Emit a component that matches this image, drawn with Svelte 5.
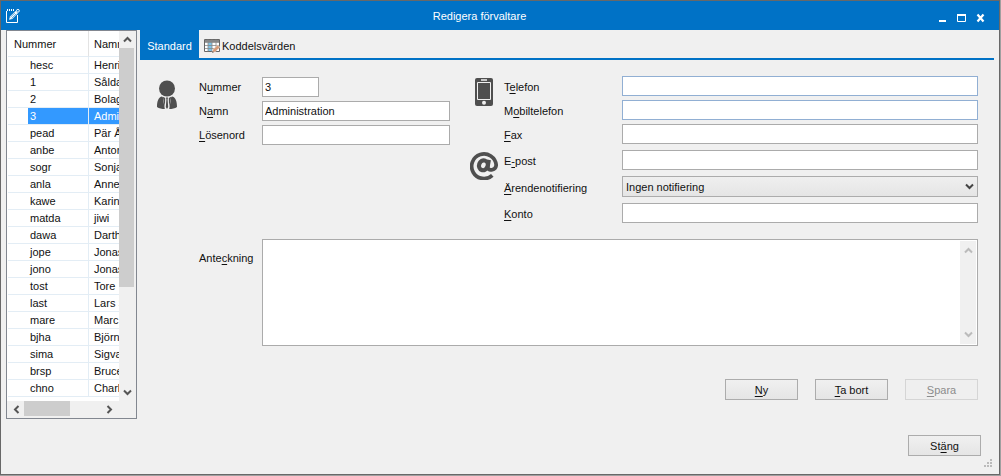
<script>
  const managers = [
    ['hesc', 'Henrik'],
    ['1', 'Sålda'],
    ['2', 'Bolag'],
    ['3', 'Administration'],
    ['pead', 'Pär Å'],
    ['anbe', 'Anton'],
    ['sogr', 'Sonja'],
    ['anla', 'Anne'],
    ['kawe', 'Karin'],
    ['matda', 'jiwi'],
    ['dawa', 'Darth'],
    ['jope', 'Jonas'],
    ['jono', 'Jonas'],
    ['tost', 'Tore'],
    ['last', 'Lars S'],
    ['mare', 'Marc'],
    ['bjha', 'Björn'],
    ['sima', 'Sigva'],
    ['brsp', 'Bruce'],
    ['chno', 'Charl']
  ];
  let selected = $state('3');
  let number = $state('3');
  let name = $state('Administration');

  function pick(row) {
    selected = row[0];
    number = row[0];
    name = row[1];
  }
</script>

{#snippet chevron(dir)}
  <svg class="chevron {dir}" viewBox="0 0 9 9" width="9" height="9" aria-hidden="true">
    <path d="M1 2.5 4.5 6 8 2.5" fill="none" stroke="currentColor" stroke-width="2" />
  </svg>
{/snippet}

<div class="window">
  <header class="titlebar">
    <svg class="app-icon" viewBox="0 0 16 16" width="16" height="16" aria-hidden="true">
      <path d="M1.500 3v11.500h11V7" fill="none" stroke="#fff" />
      <path d="M2.500 1v2M4.500 1v2M6.500 1v2M8.500 1v2" stroke="#fff" />
      <path d="M4 11.8 5 8.6 10.6 3l2.3 2.2-5.7 5.7z" fill="#fff" />
      <path d="M5.4 9.3 10 4.8M6.6 10.4l4.6-4.5" stroke="#0072c6" stroke-width=".6" />
      <circle cx="12.9" cy="2.8" r="1.4" fill="none" stroke="#fff" />
    </svg>
    <h1>Redigera förvaltare</h1>
    <div class="controls">
      <button aria-label="Minimera">
        <svg viewBox="0 0 10 10" width="10" height="10"><path d="M1 8h7" stroke="#fff" stroke-width="2" /></svg>
      </button>
      <button aria-label="Maximera">
        <svg viewBox="0 0 10 10" width="10" height="10"><path d="M.5 1.5v7h8v-7z" fill="none" stroke="#fff" /><path d="M0 2h9" stroke="#fff" stroke-width="2" /></svg>
      </button>
      <button aria-label="Stäng fönstret">
        <svg viewBox="0 0 10 10" width="10" height="10"><path d="m1.500 1.500 6 7m0-7-6 7" stroke="#fff" stroke-width="2.200" /></svg>
      </button>
    </div>
  </header>

  <div class="body">
    <aside class="list">
      <div class="list-main">
        <div class="table-clip">
          <table>
            <thead>
              <tr><th class="num">Nummer</th><th>Namn</th></tr>
            </thead>
            <tbody>
              {#each managers as row}
                <tr class:selected={selected === row[0]} onclick={() => pick(row)}>
                  <td class="num"><span>{row[0]}</span></td>
                  <td class="name">{row[1]}</td>
                </tr>
              {/each}
            </tbody>
          </table>
        </div>
        <div class="vscroll">
          <button aria-label="Rulla upp">{@render chevron('up')}</button>
          <div class="track"><div class="thumb"></div></div>
          <button aria-label="Rulla ned">{@render chevron('down')}</button>
        </div>
      </div>
      <div class="hscroll">
        <button aria-label="Rulla vänster">{@render chevron('left')}</button>
        <div class="track"><div class="thumb"></div></div>
        <button aria-label="Rulla höger">{@render chevron('right')}</button>
      </div>
    </aside>

    <main>
      <nav class="tabs">
        <button class="tab active">Standard</button>
        <button class="tab">
          <svg viewBox="0 0 16 16" width="16" height="16" aria-hidden="true">
            <path d="M.5 1.500h15v12H.5z" fill="#fff" stroke="#666" />
            <path d="M1 2h14v2H1z" fill="#888" />
            <path d="M4 4h4v9H4z" fill="#7fc4e8" />
            <path d="M4 1.500v12M8 1.500v12M12 1.500v12M1 4.500h14M1 7.500h14M1 10.500h14" stroke="#888" stroke-width=".8" />
            <path d="m8 14.800 1-3.300 4.500-4.500 2.500 2.200-4.700 4.600z" fill="#d79b78" stroke="#f0f0f0" stroke-width=".5" />
            <path d="m8 14.800.6-1.800 1.300 1.300z" fill="#555" />
          </svg>
          Koddelsvärden
        </button>
      </nav>

      <form onsubmit={(e) => e.preventDefault()}>
        <div class="columns">
          <section class="identity">
            <svg class="person" viewBox="0 0 22 30" width="22" height="30" aria-hidden="true">
              <circle cx="11" cy="8.500" r="8" fill="#4f4f4f" />
              <path d="M5.500 16.500C2.500 17.500 1 21 1 27c2 1.500 5 2 7.800 2L6.800 17zM16.500 16.500c3 1 4.500 4.500 4.500 10.500-2 1.500-5 2-7.800 2l2-12z" fill="#4f4f4f" />
              <path d="M6.800 16.800 9.200 18l-.3 9zM15.200 16.800 12.800 18l.3 9z" fill="#4f4f4f" />
              <path d="M10 17.500h2l-.4 2 .6 7.500-1.200 2-1.200-2 .6-7.500z" fill="#4f4f4f" />
            </svg>
            <div class="fields">
              <label for="number">N<u>u</u>mmer</label>
              <input id="number" class="short" bind:value={number} />
              <label for="name">N<u>a</u>mn</label>
              <input id="name" bind:value={name} />
              <label for="password"><u>L</u>ösenord</label>
              <input id="password" type="password" />
            </div>
          </section>

          <section class="contact">
            <div class="group">
              <svg viewBox="0 0 28 30" width="28" height="30" aria-hidden="true">
                <rect x="5" y="2" width="18" height="28" rx="2" fill="#4f4f4f" />
                <path d="M7.500 6.500h13v17h-13z" fill="none" stroke="#f0f0f0" />
                <path d="M11 4h6" stroke="#f0f0f0" stroke-width="1.500" />
                <circle cx="14" cy="26.800" r="2" fill="#f0f0f0" />
              </svg>
              <div class="fields">
                <label for="phone">T<u>e</u>lefon</label>
                <input id="phone" class="hot" />
                <label for="mobile">M<u>o</u>biltelefon</label>
                <input id="mobile" class="hot" />
                <label for="fax"><u>F</u>ax</label>
                <input id="fax" />
              </div>
            </div>
            <div class="group">
              <svg viewBox="0 0 28 30" width="28" height="30" aria-hidden="true">
                <path d="M22.300 25.300A12.300 12.300 0 1 1 26.200 15.200C25.700 20 19 21.800 17.700 17.500L19.100 9.800" fill="none" stroke="#4f4f4f" stroke-width="3.700" />
                <ellipse cx="13.400" cy="15.300" rx="4.300" ry="5" transform="rotate(20 13.400 15.300)" fill="none" stroke="#4f4f4f" stroke-width="4.200" />
              </svg>
              <div class="fields spaced">
                <label for="email">E<u>-</u>post</label>
                <input id="email" type="email" />
                <label for="notify"><u>Ä</u>rendenotifiering</label>
                <div class="select">
                  <select id="notify"><option>Ingen notifiering</option></select>
                  {@render chevron('down')}
                </div>
                <label for="account"><u>K</u>onto</label>
                <input id="account" />
              </div>
            </div>
          </section>
        </div>

        <div class="note">
          <label for="note">Ante<u>c</u>kning</label>
          <div class="note-box">
            <textarea id="note"></textarea>
            <div class="note-scroll">
              {@render chevron('up')}
              {@render chevron('down')}
            </div>
          </div>
        </div>

        <div class="actions">
          <button class="push"><span><u>N</u>y</span></button>
          <button class="push"><span><u>T</u>a bort</span></button>
          <button class="push" disabled><span><u>S</u>para</span></button>
        </div>
      </form>
    </main>
  </div>

  <footer>
    <button class="push"><span>St<u>ä</u>ng</span></button>
    <svg class="grip" viewBox="0 0 8 8" width="8" height="8" aria-hidden="true">
      <path d="M6 0h2v2H6zM3 3h2v2H3zM6 3h2v2H6zM0 6h2v2H0zM3 6h2v2H3zM6 6h2v2H6z" fill="#bbb" />
    </svg>
  </footer>
</div>

<style>
  :global(body) {
    margin: 0;
    background: #a0a0a0;
  }
  * {
    box-sizing: border-box;
  }
  .window {
    display: flex;
    flex-direction: column;
    min-height: calc(100vh - 1px);
    margin: 0 1px 1px 0;
    border: 1px solid #686868;
    background: #f0f0f0;
    color: #111;
    font: 11px/16px "Liberation Sans", Arial, sans-serif;
  }
  button,
  input,
  select,
  textarea {
    font: inherit;
    color: inherit;
    margin: 0;
  }
  button {
    padding: 0;
    border: 0;
    background: none;
  }
  svg {
    display: block;
    flex: none;
  }
  u {
    text-underline-offset: 2px;
  }

  .titlebar {
    display: flex;
    align-items: center;
    height: 29px;
    padding: 0 13px 0 4px;
    background: #0072c6;
    color: #fff;
  }
  h1 {
    flex: 1;
    margin: 0;
    font: inherit;
    text-align: center;
  }
  .controls {
    display: flex;
    gap: 9px;
    padding-top: 4px;
  }

  .body {
    display: flex;
    align-items: flex-start;
    gap: 3px;
    padding: 0 5px;
  }
  .list {
    flex: none;
    width: 131px;
    border: 1px solid #828790;
    background: #fff;
  }
  .list-main {
    display: flex;
  }
  .table-clip {
    flex: 1;
    overflow: hidden;
    padding: 0 0 4px 1px;
  }
  table {
    width: 160px;
    table-layout: fixed;
    border-collapse: separate;
    border-spacing: 0;
    white-space: nowrap;
  }
  th,
  td {
    height: 17px;
    padding: 0 0 0 5px;
    border-bottom: 1px solid #e3edf5;
    line-height: 16px;
    text-align: left;
    font-weight: normal;
  }
  th {
    height: 26px;
    line-height: 24px;
  }
  th.num {
    width: 81px;
    padding-left: 6px;
    border-right: 1px solid #e3e3e3;
  }
  td.num {
    padding: 0 0 0 20px;
    border-right: 1px solid #e3edf5;
  }
  td span {
    display: block;
    padding-left: 2px;
  }
  .selected span,
  .selected .name {
    background: #3399ff;
    color: #fff;
  }
  .vscroll {
    display: flex;
    flex-direction: column;
    width: 17px;
    padding-right: 2px;
    background: #f0f0f0;
  }
  .vscroll button,
  .hscroll button {
    display: grid;
    place-items: center;
    flex: none;
    width: 16px;
    height: 17px;
    color: #555;
  }
  .track {
    flex: 1;
  }
  .thumb {
    background: #cdcdcd;
  }
  .vscroll .thumb {
    height: 71%;
  }
  .hscroll {
    display: flex;
    padding: 0 19px 0 1px;
    height: 17px;
    background: #f0f0f0;
  }
  .hscroll .thumb {
    width: 60%;
    height: 15px;
  }
  .up {
    transform: rotate(180deg);
  }
  .left {
    transform: rotate(90deg);
  }
  .right {
    transform: rotate(-90deg);
  }

  main {
    flex: 1;
    min-width: 0;
  }
  .tabs {
    display: flex;
    height: 30px;
    border-bottom: 2px solid #0072c6;
  }
  .tab {
    display: flex;
    align-items: center;
    gap: 2px;
    padding: 3px 5px 0;
  }
  .active {
    width: 59px;
    justify-content: center;
    background: #0072c6;
    color: #fff;
  }
  form {
    padding: 16px 16px 0;
  }
  .columns {
    display: flex;
    gap: 20px;
  }
  .identity {
    display: flex;
    align-items: flex-start;
    gap: 21px;
    padding-top: 1px;
  }
  .person {
    margin-top: 3px;
  }
  .fields {
    flex: 1;
    display: grid;
    grid-template-columns: 118px 1fr;
    gap: 4px 0;
    align-items: center;
  }
  .identity .fields {
    grid-template-columns: 63px 188px;
  }
  .contact label {
    padding-top: 2px;
  }
  .spaced {
    row-gap: 6px;
  }
  input,
  select {
    width: 100%;
    height: 20px;
    padding: 0 2px;
    border: 1px solid #ababab;
    border-radius: 0;
    background: #fff;
    outline: none;
  }
  .short {
    width: 57px;
  }
  .hot {
    border-color: #91afd3;
  }
  .contact {
    flex: 1;
    display: grid;
    gap: 6px;
  }
  .group {
    display: flex;
    align-items: flex-start;
    gap: 6px;
  }
  .select {
    display: flex;
    align-items: center;
    position: relative;
  }
  select {
    appearance: none;
    height: 21px;
    padding: 0 3px;
    border-color: #acacac;
    background: linear-gradient(#efefef, #e5e5e5);
  }
  .select :global(.chevron) {
    position: absolute;
    right: 4px;
    color: #444;
    pointer-events: none;
  }

  .note {
    display: flex;
    margin-top: 16px;
    padding-left: 43px;
  }
  .note label {
    flex: none;
    width: 63px;
    padding-top: 11px;
  }
  .note-box {
    flex: 1;
    display: flex;
    height: 107px;
    padding: 1px;
    border: 1px solid #ababab;
    background: #fff;
  }
  textarea {
    flex: 1;
    padding: 2px;
    border: 0;
    outline: none;
    resize: none;
    background: #fff;
  }
  .note-scroll {
    display: flex;
    flex-direction: column;
    justify-content: space-between;
    align-items: center;
    width: 16px;
    padding: 5px 0;
    background: #f0f0f0;
    color: #bbb;
  }

  .actions {
    display: flex;
    justify-content: flex-end;
    gap: 17px;
    margin-top: 33px;
  }
  .push {
    width: 73px;
    height: 21px;
    border: 1px solid #acacac;
    background: linear-gradient(#f0f0f0, #e5e5e5);
  }
  .push:disabled {
    border-color: #d5d5d5;
    background: #efefef;
    color: #8c8c8c;
  }
  footer {
    display: flex;
    justify-content: flex-end;
    align-items: flex-end;
    gap: 3px;
    margin-top: auto;
    padding: 0 7px 7px 0;
  }
  footer .push {
    margin-bottom: 11px;
  }
</style>
